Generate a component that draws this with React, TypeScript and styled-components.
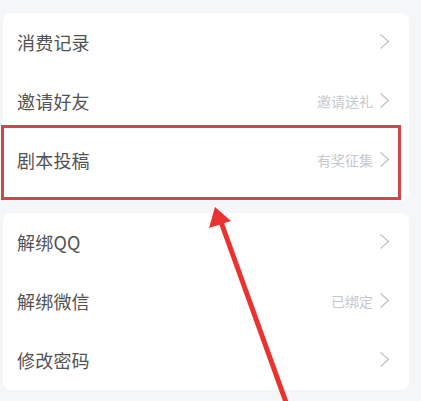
import React from "react";
import styled, { createGlobalStyle } from "styled-components";

const Global = createGlobalStyle`
  html, body { margin: 0; padding: 0; background: #f5f6f8; }
  body { font-family: "Noto Sans CJK SC", "Noto Sans", sans-serif; }
`;

const Page = styled.div`
  position: relative;
  width: 421px;
  height: 401px;
  overflow: hidden;
  background: #f5f6f8;
  padding: 13px 12px 0 3px;
  box-sizing: border-box;
  display: flex;
  flex-direction: column;
  gap: 12px;
`;

const Card = styled.div<{ $padBottom?: number }>`
  background: #ffffff;
  border-radius: 8px;
  display: flex;
  flex-direction: column;
  padding-bottom: ${(p) => p.$padBottom ?? 0}px;
`;

const Row = styled.div`
  height: 59px;
  display: flex;
  align-items: center;
  padding: 0 19px 2px 14px;
  box-sizing: border-box;
`;

const Label = styled.span`
  flex: 1;
  font-size: 18px;
  line-height: 1;
  color: #525252;
  letter-spacing: 0.2px;
`;

const Hint = styled.span`
  font-size: 14px;
  line-height: 1;
  color: #c6c8cc;
  margin-right: 6px;
`;

const Chevron = () => (
  <svg width="11" height="17" viewBox="0 0 11 17">
    <path d="M1.5 1.5 L9.5 8.5 L1.5 15.5" fill="none" stroke="#c4c6ca" strokeWidth="1.4" />
  </svg>
);

const Highlight = styled.div`
  position: absolute;
  left: 1px;
  top: 125px;
  width: 400px;
  height: 75px;
  box-sizing: border-box;
  border: 3px solid #d3444b;
  pointer-events: none;
`;

const Arrow = styled.svg`
  position: absolute;
  left: 0;
  top: 0;
  pointer-events: none;
`;

type Item = { label: string; hint?: string };

const group1: Item[] = [
  { label: "消费记录" },
  { label: "邀请好友", hint: "邀请送礼" },
  { label: "剧本投稿", hint: "有奖征集" },
];
const group2: Item[] = [
  { label: "解绑QQ" },
  { label: "解绑微信", hint: "已绑定" },
  { label: "修改密码" },
];

const ListRow = ({ item }: { item: Item }) => (
  <Row>
    <Label>{item.label}</Label>
    {item.hint && <Hint>{item.hint}</Hint>}
    <Chevron />
  </Row>
);

export default function App() {
  return (
    <>
      <Global />
      <Page>
        <Card $padBottom={11}>
          {group1.map((it) => (
            <ListRow key={it.label} item={it} />
          ))}
        </Card>
        <Card>
          {group2.map((it) => (
            <ListRow key={it.label} item={it} />
          ))}
        </Card>
        <Highlight />
        <Arrow width="421" height="401" viewBox="0 0 421 401">
          <line x1="287" y1="405" x2="221" y2="222" stroke="#ea3330" strokeWidth="5" />
          <polygon points="215,207 231,221 209,228" fill="#ea3330" />
        </Arrow>
      </Page>
    </>
  );
}
